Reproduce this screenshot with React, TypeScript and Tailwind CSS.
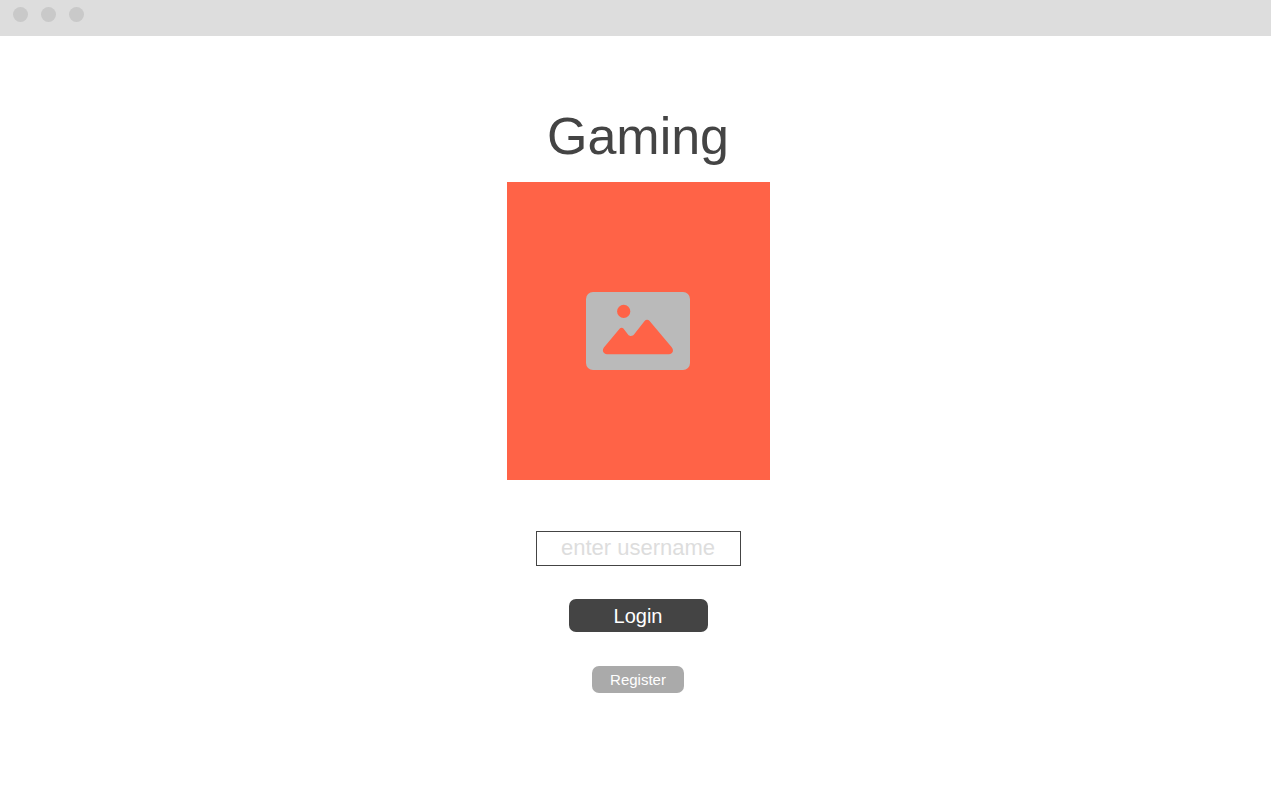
function ImageIcon() {
  return (
    <svg
      role="img"
      aria-label="Image placeholder"
      viewBox="0 0 104 78"
      className="h-[78px] w-[104px]"
    >
      <rect width="104" height="78" rx="7" fill="#bababa" />
      <circle cx="37.7" cy="19.4" r="6.6" fill="#ff6347" />
      <path
        d="M33.8 36.6 L17.9 55.6 C15.6 58.6 17.6 62.3 21 62.3 H83 C86.6 62.3 88.2 58.6 85.9 55.6 L63.6 28.9 C62.2 27.2 60 27.2 58.6 28.9 L48.2 42.2 C46.8 44.3 43.6 44.5 42 42.4 L37.4 36.6 C36.4 35.4 34.8 35.4 33.8 36.6 Z"
        fill="#ff6347"
      />
    </svg>
  );
}

export default function App() {
  return (
    <div className="min-h-screen bg-white font-['Liberation_Sans',Arial,sans-serif] text-[#444444]">
      <header className="flex h-9 gap-[13px] bg-[#dddddd] pt-[7px] pl-[13px]">
        <span className="size-[15px] rounded-full bg-[#c9c9c9]" />
        <span className="size-[15px] rounded-full bg-[#c9c9c9]" />
        <span className="size-[15px] rounded-full bg-[#c9c9c9]" />
      </header>
      <main className="flex flex-col items-center pt-[70px] pb-8 pl-[5px]">
        <h1 className="text-[52px] leading-[60px]">Gaming</h1>
        <div className="mt-4 flex h-[298px] w-[263px] items-center justify-center bg-[#ff6347]">
          <ImageIcon />
        </div>
        <form
          className="mt-[51px] flex flex-col items-center"
          onSubmit={(event) => event.preventDefault()}
        >
          <input
            type="text"
            aria-label="Username"
            placeholder="enter username"
            className="h-[35px] w-[205px] border border-[#444444] bg-white px-4 pb-0.5 text-center text-[22px] leading-7 placeholder:text-[#dddddd]"
          />
          <button
            type="submit"
            className="mt-[33px] h-[33px] w-[139px] rounded-[7px] bg-[#444444] text-xl text-white"
          >
            Login
          </button>
          <button
            type="button"
            className="mt-[34px] h-[27px] w-[92px] rounded-[7px] bg-[#aaaaaa] pt-0.5 text-[15px] text-white"
          >
            Register
          </button>
        </form>
      </main>
    </div>
  );
}
